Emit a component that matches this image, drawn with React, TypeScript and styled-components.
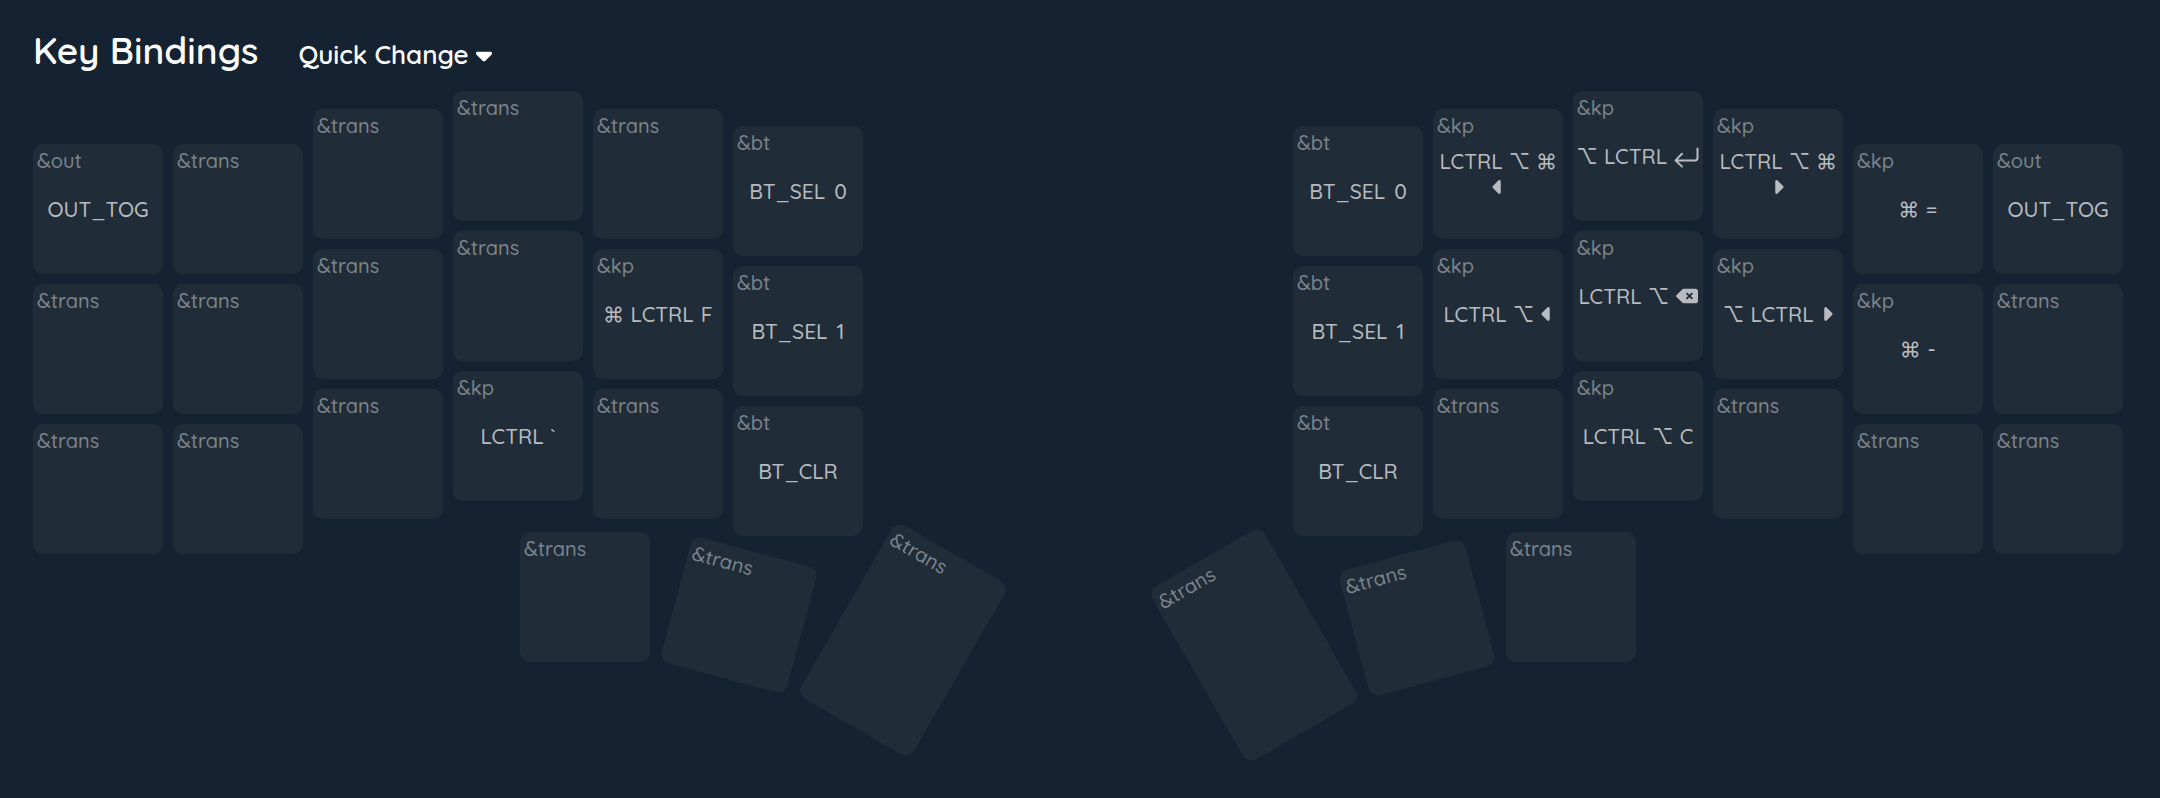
import React from 'react';
import styled, { createGlobalStyle, css } from 'styled-components';
import { FaCaretDown, FaCaretLeft, FaCaretRight, FaDeleteLeft } from 'react-icons/fa6';

const GlobalStyle = createGlobalStyle`
  body {
    margin: 0;
    background: #152231;
    font-family: Quicksand, Lato, 'DejaVu Sans', sans-serif;
  }
`;

const Page = styled.main`
  min-height: 100vh;
  box-sizing: border-box;
  padding: 27px 37px 27px 33px;
`;

const Header = styled.header`
  display: flex;
  align-items: baseline;
  gap: 40px;
  color: #fff;
`;

const Title = styled.h1`
  margin: 0;
  font-size: 37px;
  line-height: 46px;
  font-weight: 600;
`;

const QuickChange = styled.button`
  display: flex;
  align-items: center;
  gap: 2px;
  padding: 0;
  border: 0;
  background: none;
  color: inherit;
  font: inherit;
  font-size: 26px;
  line-height: 32px;
  font-weight: 600;
  cursor: pointer;

  svg {
    width: auto;
    height: 26px;
  }
`;

const Board = styled.section`
  display: flex;
  justify-content: space-between;
  margin-top: 18px;
`;

const Half = styled.div`
  display: flex;
  flex-direction: column;
`;

const Columns = styled.div`
  display: flex;
  gap: 10px;
`;

const Column = styled.div<{ $drop: number }>`
  display: flex;
  flex-direction: column;
  gap: 10px;
  padding-top: ${(p) => p.$drop}px;
`;

const Thumbs = styled.div<{ $side: 'left' | 'right' }>`
  display: flex;
  align-items: flex-start;
  width: 830px;
  box-sizing: border-box;
  margin-top: -22px;
  ${(p) =>
    p.$side === 'left'
      ? css`
          padding-left: 487px;
        `
      : css`
          justify-content: flex-end;
          padding-right: 487px;
        `}
`;

const ThumbSlot = styled.div<{ $drop: number; $gap: number }>`
  padding-top: ${(p) => p.$drop}px;
  margin-left: ${(p) => p.$gap}px;
`;

const Cap = styled.button<{ $tall?: boolean; $turn?: number }>`
  display: grid;
  flex: none;
  width: 130px;
  height: ${(p) => (p.$tall ? 200 : 130)}px;
  padding: 0;
  border: 0;
  border-radius: 10px;
  background: #202d39;
  color: #b8bbbf;
  font: inherit;
  font-weight: 500;
  transform: ${(p) => (p.$turn ? `rotate(${p.$turn}deg)` : 'none')};
  cursor: pointer;
`;

const Behavior = styled.span`
  grid-area: 1 / 1;
  place-self: start;
  padding: 4px;
  font-size: 20px;
  line-height: 25px;
  color: #7c848c;
`;

const Binding = styled.span<{ $gap: number }>`
  grid-area: 1 / 1;
  display: flex;
  flex-wrap: wrap;
  align-items: center;
  justify-content: center;
  align-content: center;
  column-gap: ${(p) => p.$gap}px;
  font-size: 21px;
  line-height: 26px;
`;

const Symbol = styled.span`
  display: flex;
  justify-content: center;
  box-sizing: border-box;
  width: 20px;
  height: 26px;
  padding-top: 1px;
  font-family: Inter, 'DejaVu Sans', sans-serif;
  font-weight: 400;
`;

const caret = css`
  width: auto;
  height: 22px;
  margin: 2px -5px;
`;
const LeftIcon = styled(FaCaretLeft)`
  ${caret}
`;
const RightIcon = styled(FaCaretRight)`
  ${caret}
`;
const BackspaceIcon = styled(FaDeleteLeft)`
  width: auto;
  height: 22px;
`;

function EnterIcon() {
  return (
    <svg
      width="25"
      height="24"
      viewBox="0 0 25 24"
      fill="none"
      stroke="currentColor"
      strokeWidth="2"
      strokeLinecap="round"
      strokeLinejoin="round"
      aria-label="Enter"
    >
      <path d="M23.5 4.5V14a2.4 2.4 0 0 1-2.4 2.4H1.5M8 9.8L1.5 16.4L8 22.6" />
    </svg>
  );
}

type KeyData = { behavior: string; params?: string[] };

function Param({ name }: { name: string }) {
  switch (name) {
    case 'left':
      return <LeftIcon aria-label="Left" />;
    case 'right':
      return <RightIcon aria-label="Right" />;
    case 'backspace':
      return <BackspaceIcon aria-label="Backspace" />;
    case 'enter':
      return <EnterIcon />;
    case '⌘':
    case '⌥':
      return <Symbol>{name}</Symbol>;
    default:
      return <span>{name}</span>;
  }
}

function Key({ data, tall, turn }: { data: KeyData; tall?: boolean; turn?: number }) {
  return (
    <Cap type="button" $tall={tall} $turn={turn}>
      <Behavior>{data.behavior}</Behavior>
      {data.params && (
        <Binding $gap={data.behavior === '&bt' ? 9 : 7}>
          {data.params.map((name) => (
            <Param key={name} name={name} />
          ))}
        </Binding>
      )}
    </Cap>
  );
}

const trans: KeyData = { behavior: '&trans' };
const kp = (...params: string[]): KeyData => ({ behavior: '&kp', params });
const bt = (...params: string[]): KeyData => ({ behavior: '&bt', params });
const out: KeyData = { behavior: '&out', params: ['OUT_TOG'] };
const bluetooth = [bt('BT_SEL', '0'), bt('BT_SEL', '1'), bt('BT_CLR')];

type ColumnData = { drop: number; keys: KeyData[] };

const leftColumns: ColumnData[] = [
  { drop: 53, keys: [out, trans, trans] },
  { drop: 53, keys: [trans, trans, trans] },
  { drop: 18, keys: [trans, trans, trans] },
  { drop: 0, keys: [trans, trans, kp('LCTRL', '`')] },
  { drop: 18, keys: [trans, kp('⌘', 'LCTRL', 'F'), trans] },
  { drop: 35, keys: bluetooth },
];

const rightColumns: ColumnData[] = [
  { drop: 35, keys: bluetooth },
  { drop: 18, keys: [kp('LCTRL', '⌥', '⌘', 'left'), kp('LCTRL', '⌥', 'left'), trans] },
  { drop: 0, keys: [kp('⌥', 'LCTRL', 'enter'), kp('LCTRL', '⌥', 'backspace'), kp('LCTRL', '⌥', 'C')] },
  { drop: 18, keys: [kp('LCTRL', '⌥', '⌘', 'right'), kp('⌥', 'LCTRL', 'right'), trans] },
  { drop: 53, keys: [kp('⌘', '='), kp('⌘', '-'), trans] },
  { drop: 53, keys: [out, trans, trans] },
];

type ThumbData = { drop: number; gap: number; turn?: number; tall?: boolean };

const leftThumbs: ThumbData[] = [
  { drop: 0, gap: 0 },
  { drop: 18, gap: 24, turn: 15 },
  { drop: 8, gap: 34, turn: 30, tall: true },
];

const rightThumbs: ThumbData[] = [
  { drop: 13, gap: 0, turn: -30, tall: true },
  { drop: 21, gap: 33, turn: -15 },
  { drop: 0, gap: 24 },
];

function KeyboardHalf({ side, columns, thumbs }: { side: 'left' | 'right'; columns: ColumnData[]; thumbs: ThumbData[] }) {
  return (
    <Half>
      <Columns>
        {columns.map((column, c) => (
          <Column key={c} $drop={column.drop}>
            {column.keys.map((key, k) => (
              <Key key={k} data={key} />
            ))}
          </Column>
        ))}
      </Columns>
      <Thumbs $side={side}>
        {thumbs.map((thumb, t) => (
          <ThumbSlot key={t} $drop={thumb.drop} $gap={thumb.gap}>
            <Key data={trans} tall={thumb.tall} turn={thumb.turn} />
          </ThumbSlot>
        ))}
      </Thumbs>
    </Half>
  );
}

export default function App() {
  return (
    <>
      <GlobalStyle />
      <Page>
        <Header>
          <Title>Key Bindings</Title>
          <QuickChange type="button">
            Quick Change
            <FaCaretDown />
          </QuickChange>
        </Header>
        <Board>
          <KeyboardHalf side="left" columns={leftColumns} thumbs={leftThumbs} />
          <KeyboardHalf side="right" columns={rightColumns} thumbs={rightThumbs} />
        </Board>
      </Page>
    </>
  );
}
